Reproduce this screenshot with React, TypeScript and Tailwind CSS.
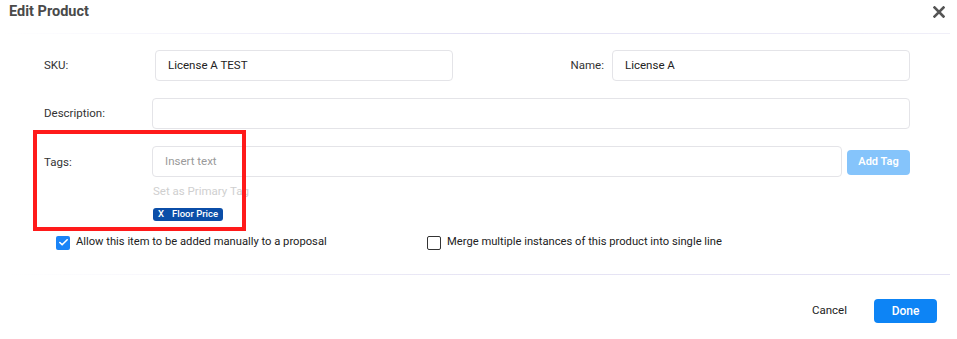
import { Check } from "lucide-react";

const font = { fontFamily: "Roboto, 'Liberation Sans', sans-serif" };

function Field({ value, placeholder, className }: { value?: string; placeholder?: string; className: string }) {
  return (
    <div className={`h-[31px] flex items-center px-3 border border-[#e4e4e8] rounded-[4px] bg-white text-[11.5px] ${className}`}>
      {value ? <span className="text-[#222]">{value}</span> : <span className="text-[#9a9a9a]">{placeholder}</span>}
    </div>
  );
}

export default function App() {
  return (
    <div style={font} className="relative w-[957px] h-[339px] bg-white overflow-hidden text-[#333]">
      {/* header */}
      <div className="h-[33px] flex items-center justify-between pl-[9px] pr-[12px]">
        <h1 className="text-[14.5px] font-bold text-[#4a4a4a] -mt-[9px]">Edit Product</h1>
        <svg width="12" height="12" viewBox="0 0 12 12" className="-mt-[9px]">
          <path d="M1.5 1.5 L10.5 10.5 M10.5 1.5 L1.5 10.5" stroke="#555" strokeWidth="2.6" strokeLinecap="square" />
        </svg>
      </div>
      <div className="h-px w-[950px] bg-gradient-to-r from-white via-[#e2e0f4] to-[#f0eff8]" />

      {/* body */}
      <div className="pl-[44px] pr-[47px] pt-[16px]">
        <div className="flex items-center h-[31px] text-[11.5px]">
          <span className="w-[111px]">SKU:</span>
          <Field value="License A TEST" className="w-[298px]" />
          <span className="ml-auto mr-[8px]">Name:</span>
          <Field value="License A" className="w-[298px]" />
        </div>

        <div className="flex items-center h-[31px] mt-[17px] text-[11.5px]">
          <span className="w-[108px]">Description:</span>
          <Field className="flex-1" />
        </div>

        <div className="flex mt-[17px]">
          <span className="text-[11.5px] w-[108px] pt-[8px]">Tags:</span>
          <div className="flex-1">
            <div className="flex items-center">
              <Field placeholder="Insert text" className="flex-1" />
              <button className="ml-[5px] mt-[2px] w-[63px] h-[25px] rounded-[4px] bg-[#85c4fb] text-white text-[11px] font-semibold">
                Add Tag
              </button>
            </div>
            <div className="pl-[1px] mt-[6px] text-[11.5px] text-[#cfcfcf]">Set as Primary Tag</div>
            <div className="ml-[1px] mt-[7px] inline-flex items-center h-[13px] px-[5px] rounded-[3px] bg-[#0b4ea8] text-white text-[9.5px] font-medium leading-none">
              <span className="mr-[8px]">X</span>
              <span>Floor Price</span>
            </div>
          </div>
        </div>

        <div className="flex items-center mt-[10px] ml-[12px] text-[11.2px] text-[#222]">
          <span className="w-[14px] h-[14px] rounded-[2px] bg-[#1a84f7] flex items-center justify-center">
            <Check size={11} strokeWidth={3.5} color="white" />
          </span>
          <span className="ml-[6px] w-[351px]">Allow this item to be added manually to a proposal</span>
          <span className="w-[14px] h-[14px] rounded-[2px] border-[1.5px] border-[#333]" />
          <span className="ml-[6px]">Merge multiple instances of this product into single line</span>
        </div>
      </div>

      <div className="mt-[23px] ml-[10px] h-px w-[940px] bg-gradient-to-r from-white via-[#e6e4f4] to-[#e4e2f4]" />

      {/* footer */}
      <div className="flex items-center justify-end pr-[20px] mt-[24px]">
        <span className="text-[11.5px] text-[#222] mr-[27px]">Cancel</span>
        <button className="w-[63px] h-[24px] rounded-[4px] bg-[#0d84f5] text-white text-[12px] font-medium">Done</button>
      </div>

      {/* annotation */}
      <div className="absolute left-[33px] top-[130px] w-[213px] h-[101px] border-[4px] border-[#ff1a1a] pointer-events-none" />
    </div>
  );
}
